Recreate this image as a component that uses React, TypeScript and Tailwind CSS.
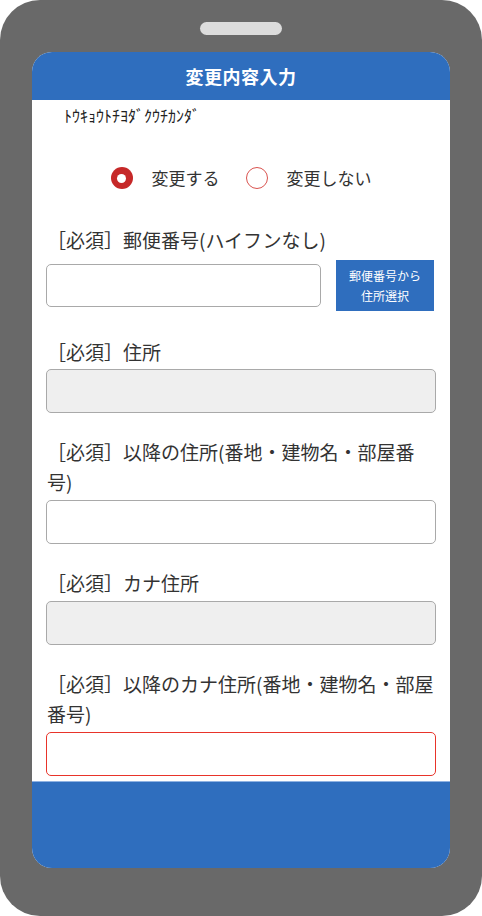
import React from "react";

const font = { fontFamily: '"Noto Sans CJK JP", "Noto Sans", sans-serif' };

function Label({ children }: { children: React.ReactNode }) {
  return (
    <div className="text-[19px] leading-[30px] text-[#333333] pl-[1px]">{children}</div>
  );
}

function TextInput({ variant = "white" }: { variant?: "white" | "gray" | "red" }) {
  const cls =
    variant === "gray"
      ? "bg-[#efefef] border-[#a9a9a9]"
      : variant === "red"
      ? "bg-white border-[#e8342a]"
      : "bg-white border-[#a9a9a9]";
  return <div className={`h-[44px] w-full rounded-[5px] border ${cls}`} />;
}

export default function App() {
  return (
    <div style={font} className="w-[482px] h-[916px] bg-white">
      <div className="w-[482px] h-[916px] rounded-[40px] bg-[#696969] flex flex-col items-center pt-[22px]">
        <div className="w-[82px] h-[13px] rounded-full bg-[#dcdcdc]" />
        <div className="mt-[17px] w-[418px] h-[816px] rounded-[20px] overflow-hidden bg-white flex flex-col">
          <div className="h-[48px] shrink-0 bg-[#2f6ebe] flex items-center justify-center text-white text-[18px] font-bold tracking-[0.5px]">
            変更内容入力
          </div>
          <div className="flex-1 overflow-hidden px-[14px]">
            <div className="pt-[3px] pl-[18px] text-[16px] leading-[24px] text-[#222222]">
              ﾄｳｷｮｳﾄﾁﾖﾀﾞｸｳﾁｶﾝﾀﾞ
            </div>
            <div className="mt-[36px] h-[30px] flex items-center justify-center text-[17px] text-[#333333]">
              <div className="flex items-center">
                <span className="w-[22px] h-[22px] rounded-full bg-[#c62828] flex items-center justify-center">
                  <span className="w-[9px] h-[9px] rounded-full bg-white" />
                </span>
                <span className="ml-[19px]">変更する</span>
              </div>
              <div className="flex items-center ml-[26px]">
                <span className="w-[22px] h-[22px] rounded-full border-[1.5px] border-[#d9534f] bg-white" />
                <span className="ml-[19px]">変更しない</span>
              </div>
            </div>

            <div className="mt-[32px]">
              <Label>［必須］郵便番号(ハイフンなし)</Label>
              <div className="mt-[5px] flex items-center gap-[15px] h-[51px]">
                <div className="flex-1 h-[43px] rounded-[5px] border border-[#a9a9a9] bg-white" />
                <div className="w-[98px] h-[51px] mr-[2px] bg-[#2f6ebe] text-white text-[12px] leading-[20px] flex flex-col items-center justify-center">
                  <span>郵便番号から</span>
                  <span>住所選択</span>
                </div>
              </div>
            </div>

            <div className="mt-[26px]">
              <Label>［必須］住所</Label>
              <div className="mt-[2px]">
                <TextInput variant="gray" />
              </div>
            </div>

            <div className="mt-[24px]">
              <Label>［必須］以降の住所(番地・建物名・部屋番号)</Label>
              <div className="mt-[3px]">
                <TextInput />
              </div>
            </div>

            <div className="mt-[24px]">
              <Label>［必須］カナ住所</Label>
              <div className="mt-[3px]">
                <TextInput variant="gray" />
              </div>
            </div>

            <div className="mt-[24px]">
              <Label>［必須］以降のカナ住所(番地・建物名・部屋番号)</Label>
              <div className="mt-[3px]">
                <TextInput variant="red" />
              </div>
            </div>
          </div>
          <div className="h-[87px] shrink-0 bg-[#2f6ebe] border-t border-[#8fb2e2]" />
        </div>
      </div>
    </div>
  );
}
